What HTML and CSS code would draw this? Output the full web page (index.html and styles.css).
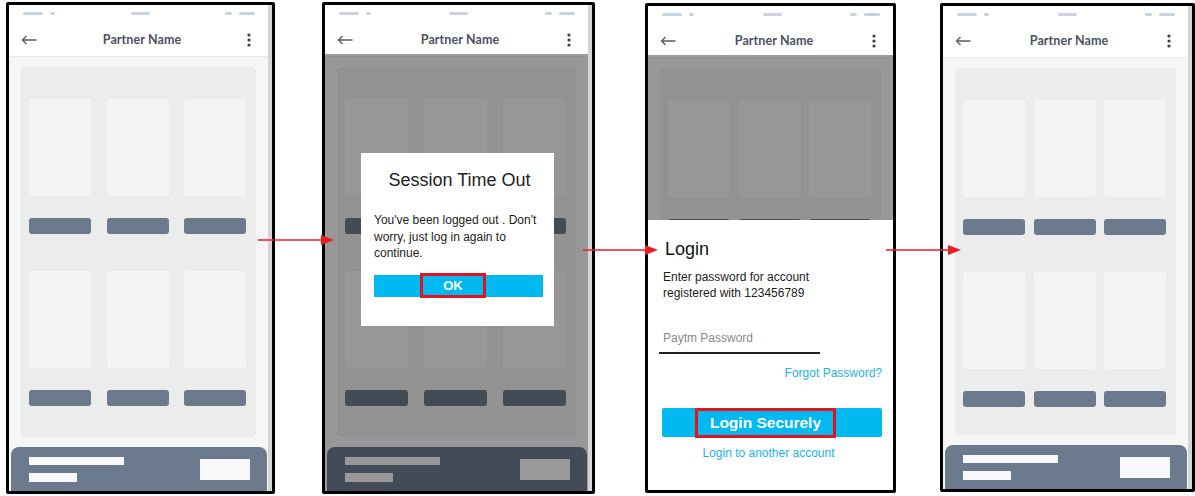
FILE: index.html
```html
<!DOCTYPE html>
<html>
<head>
<meta charset="utf-8">
<title>Session timeout flow</title>
<link rel="stylesheet" href="styles.css">
</head>
<body>
<div class="canvas">

  <!-- Phone 1 -->
  <div class="phone p1">
    <div class="screen striped">
      <div class="status">
        <div class="grp"><i class="d20"></i><i class="d5"></i></div>
        <div class="grp"><i class="d19"></i></div>
        <div class="grp"><i class="d7"></i><i class="d16"></i></div>
      </div>
      <div class="appbar">
        <svg class="back" width="16" height="10" viewBox="0 0 16 10"><path d="M15.5 5H1.5M5.5 1L1.5 5L5.5 9" fill="none" stroke="#555b66" stroke-width="1.3"/></svg>
        <span class="title">Partner Name</span>
        <svg class="kebab" width="4" height="14" viewBox="0 0 4 14"><circle cx="2" cy="2" r="1.6"/><circle cx="2" cy="7" r="1.6"/><circle cx="2" cy="12" r="1.6"/></svg>
      </div>
      <div class="body">
        <div class="panel">
          <div class="row cards"><b></b><b></b><b></b></div>
          <div class="row bars"><b></b><b></b><b></b></div>
          <div class="row cards"><b></b><b></b><b></b></div>
          <div class="row bars"><b></b><b></b><b></b></div>
        </div>
        <div class="footer">
          <div class="lines"><i class="l1"></i><i class="l2"></i></div>
          <i class="box"></i>
        </div>
      </div>
    </div>
  </div>

  <!-- Phone 2 -->
  <div class="phone p2">
    <div class="screen striped">
      <div class="status">
        <div class="grp"><i class="d20"></i><i class="d5"></i></div>
        <div class="grp"><i class="d19"></i></div>
        <div class="grp"><i class="d7"></i><i class="d16"></i></div>
      </div>
      <div class="appbar">
        <svg class="back" width="16" height="10" viewBox="0 0 16 10"><path d="M15.5 5H1.5M5.5 1L1.5 5L5.5 9" fill="none" stroke="#555b66" stroke-width="1.3"/></svg>
        <span class="title">Partner Name</span>
        <svg class="kebab" width="4" height="14" viewBox="0 0 4 14"><circle cx="2" cy="2" r="1.6"/><circle cx="2" cy="7" r="1.6"/><circle cx="2" cy="12" r="1.6"/></svg>
      </div>
      <div class="body dim">
        <div class="panel">
          <div class="row cards"><b></b><b></b><b></b></div>
          <div class="row bars"><b></b><b></b><b></b></div>
          <div class="row cards"><b></b><b></b><b></b></div>
          <div class="row bars"><b></b><b></b><b></b></div>
        </div>
        <div class="footer">
          <div class="lines"><i class="l1"></i><i class="l2"></i></div>
          <i class="box"></i>
        </div>
        <div class="dialog">
          <div class="d-title">Session Time Out</div>
          <div class="d-text">You've been logged out . Don't<br>worry, just log in again to<br>continue.</div>
          <div class="d-btn"><span class="hl ok">OK</span></div>
        </div>
      </div>
    </div>
  </div>

  <!-- Phone 3 -->
  <div class="phone p3">
    <div class="screen">
      <div class="status">
        <div class="grp"><i class="d20"></i><i class="d5"></i></div>
        <div class="grp"><i class="d19"></i></div>
        <div class="grp"><i class="d7"></i><i class="d16"></i></div>
      </div>
      <div class="appbar">
        <svg class="back" width="16" height="10" viewBox="0 0 16 10"><path d="M15.5 5H1.5M5.5 1L1.5 5L5.5 9" fill="none" stroke="#555b66" stroke-width="1.3"/></svg>
        <span class="title">Partner Name</span>
        <svg class="kebab" width="4" height="14" viewBox="0 0 4 14"><circle cx="2" cy="2" r="1.6"/><circle cx="2" cy="7" r="1.6"/><circle cx="2" cy="12" r="1.6"/></svg>
      </div>
      <div class="body dim">
        <div class="panel">
          <div class="row cards"><b></b><b></b><b></b></div>
          <div class="row bars"><b></b><b></b><b></b></div>
          <div class="row cards"><b></b><b></b><b></b></div>
          <div class="row bars"><b></b><b></b><b></b></div>
        </div>
        <div class="footer">
          <div class="lines"><i class="l1"></i><i class="l2"></i></div>
          <i class="box"></i>
        </div>
        <div class="login">
          <div class="lg-title">Login</div>
          <div class="lg-text">Enter password for account<br>registered with 123456789</div>
          <div class="lg-input">Paytm Password</div>
          <div class="lg-forgot">Forgot Password?</div>
          <div class="lg-btn"><span class="hl secure">Login Securely</span></div>
          <div class="lg-other">Login to another account</div>
        </div>
      </div>
    </div>
  </div>

  <!-- Phone 4 -->
  <div class="phone p4">
    <div class="screen striped">
      <div class="status">
        <div class="grp"><i class="d20"></i><i class="d5"></i></div>
        <div class="grp"><i class="d19"></i></div>
        <div class="grp"><i class="d7"></i><i class="d16"></i></div>
      </div>
      <div class="appbar">
        <svg class="back" width="16" height="10" viewBox="0 0 16 10"><path d="M15.5 5H1.5M5.5 1L1.5 5L5.5 9" fill="none" stroke="#555b66" stroke-width="1.3"/></svg>
        <span class="title">Partner Name</span>
        <svg class="kebab" width="4" height="14" viewBox="0 0 4 14"><circle cx="2" cy="2" r="1.6"/><circle cx="2" cy="7" r="1.6"/><circle cx="2" cy="12" r="1.6"/></svg>
      </div>
      <div class="body">
        <div class="panel">
          <div class="row cards"><b></b><b></b><b></b></div>
          <div class="row bars"><b></b><b></b><b></b></div>
          <div class="row cards"><b></b><b></b><b></b></div>
          <div class="row bars"><b></b><b></b><b></b></div>
        </div>
        <div class="footer">
          <div class="lines"><i class="l1"></i><i class="l2"></i></div>
          <i class="box"></i>
        </div>
      </div>
    </div>
  </div>

  <svg class="arrows" width="1195" height="496" viewBox="0 0 1195 496">
    <line x1="258" y1="240" x2="324" y2="240" stroke="#ee1b24" stroke-width="1.6"/>
    <polygon points="321,235 334,240 321,245" fill="#ee1b24"/>
    <line x1="583" y1="250" x2="647" y2="250" stroke="#ee1b24" stroke-width="1.6"/>
    <polygon points="645,245 658,250 645,255" fill="#ee1b24"/>
    <line x1="886" y1="250" x2="950" y2="250" stroke="#ee1b24" stroke-width="1.6"/>
    <polygon points="948,245 961,250 948,255" fill="#ee1b24"/>
  </svg>
</div>
</body>
</html>
```

FILE: styles.css
```css
html, body {
  margin: 0;
  padding: 0;
  background: #ffffff;
}

body {
  width: 1195px;
  height: 496px;
  overflow: hidden;
  font-family: "Liberation Sans", Arial, sans-serif;
}

.canvas {
  position: relative;
  width: 1195px;
  height: 496px;
  display: flex;
  align-items: flex-start;
  padding: 2px 0 0 6px;
  box-sizing: border-box;
}

.phone {
  border: 3px solid #000;
  box-sizing: border-box;
  display: flex;
  background: #fff;
  border-radius: 2px;
  flex: none;
  overflow: hidden;
}

.p1 { width: 269px; height: 492px; }
.p2 { width: 273px; height: 492px; margin-left: 47px; }
.p3 { width: 251px; height: 490px; margin-left: 50px; margin-top: 1px; }
.p4 { width: 255px; height: 489px; margin-left: 44px; margin-top: 1px; }

.screen {
  flex: 1;
  display: flex;
  flex-direction: column;
  min-width: 0;
  min-height: 0;
  background: #fff;
}

.screen.striped {
  border-right: 4px solid #d5d5d5;
}

/* status bar */
.status {
  height: 18px;
  flex: none;
  display: flex;
  justify-content: space-between;
  align-items: flex-start;
  padding: 7px 13px 0 14px;
  box-sizing: border-box;
}

.grp {
  display: flex;
  gap: 7px;
}

.status i {
  display: block;
  height: 3px;
  border-radius: 2px;
  background: #c8d3e1;
}

.status .d20 { width: 20px; }
.status .d5 { width: 5px; }
.status .d19 { width: 19px; }
.status .d7 { width: 7px; }
.status .d16 { width: 16px; }

/* app bar */
.appbar {
  height: 34px;
  flex: none;
  display: flex;
  align-items: center;
  justify-content: space-between;
  padding: 0 17px 0 12px;
  border-bottom: 1px solid #e4ebf3;
  box-sizing: border-box;
}

.back { display: block; }

.kebab {
  display: block;
  fill: #3a3f48;
}

.title {
  font-family: Lato, "Open Sans", sans-serif;
  font-weight: 700;
  font-size: 12.5px;
  color: #4b5262;
  letter-spacing: 0.1px;
}

/* body */
.body {
  position: relative;
  flex: 1;
  min-height: 0;
  display: flex;
  flex-direction: column;
  gap: 10px;
  padding-top: 10px;
  background: #f6f6f6;
}

.panel {
  flex: 1;
  min-height: 0;
  overflow: hidden;
  margin: 0 12px;
  padding: 32px 10px 0 8px;
  background: #ececec;
  border-radius: 4px;
}

.row {
  display: flex;
  justify-content: space-between;
}

.row b {
  display: block;
  width: 62px;
}

.row.cards { height: 97px; margin-bottom: 22px; }
.row.bars { height: 16px; margin-bottom: 37px; }
.row.bars:last-child { margin-bottom: 0; }

.row.cards b {
  background: #f4f4f4;
  border-radius: 2px;
}

.row.bars b {
  background: #6b7a8c;
  border-radius: 3px;
}

.p2 .row b { width: 63px; }

.footer {
  flex: none;
  height: 44px;
  margin: 0 1px 0 2px;
  background: #6b7a8d;
  border-radius: 8px 8px 0 0;
  display: flex;
  justify-content: space-between;
  align-items: flex-start;
  padding: 10px 17px 0 18px;
  box-sizing: border-box;
}

.footer .lines {
  display: flex;
  flex-direction: column;
  gap: 8px;
}

.footer i {
  display: block;
  background: #f8f7f9;
}

.footer .l1 { width: 95px; height: 8px; }
.footer .l2 { width: 48px; height: 9px; }
.footer .box { width: 50px; height: 21px; margin-top: 2px; }

/* dim overlay */
.body.dim::after {
  content: "";
  position: absolute;
  left: 0;
  right: 0;
  top: -3px;
  bottom: 0;
  background: rgba(0, 0, 0, 0.38);
  z-index: 1;
}

/* highlight box */
.hl {
  display: inline-flex;
  align-items: center;
  justify-content: center;
  border: 3px solid #e3141f;
  box-sizing: border-box;
  color: #fff;
  font-weight: 700;
}

/* dialog */
.dialog {
  position: absolute;
  z-index: 2;
  left: 36px;
  top: 96px;
  width: 193px;
  height: 173px;
  background: #fff;
  box-sizing: border-box;
  padding: 17px 11px 0 13px;
  color: #222;
}

.d-title {
  font-size: 18px;
  line-height: 20px;
  text-align: center;
  margin-left: 2px;
}

.d-text {
  margin-top: 22px;
  font-size: 12px;
  line-height: 16.5px;
  white-space: nowrap;
}

.d-btn {
  margin-top: 13px;
  height: 22px;
  background: #00b9f1;
  display: flex;
  justify-content: flex-start;
  align-items: center;
  padding-left: 46px;
}

.hl.ok {
  width: 66px;
  height: 25px;
  margin-top: -1px;
  font-size: 13px;
}

/* login sheet */
.login {
  position: absolute;
  z-index: 2;
  left: 0;
  right: 0;
  top: 162px;
  bottom: 0;
  background: #fff;
  padding: 18px 11px 0 15px;
  box-sizing: border-box;
  color: #1d1d1d;
}

.lg-title {
  font-size: 18px;
  line-height: 22px;
  margin-left: 2px;
  color: #111;
}

.lg-text {
  margin-top: 9px;
  font-size: 12px;
  line-height: 16px;
}

.lg-input {
  margin-top: 29px;
  margin-left: -4px;
  width: 161px;
  padding: 0 0 6px 4px;
  box-sizing: border-box;
  border-bottom: 2px solid #222;
  font-size: 12px;
  line-height: 16px;
  color: #8a8a8a;
}

.lg-forgot {
  margin-top: 11px;
  text-align: right;
  font-size: 12px;
  line-height: 16px;
  color: #22b2ee;
}

.lg-btn {
  margin-top: 27px;
  margin-left: -1px;
  height: 29px;
  background: #00b9f1;
  border-radius: 2px;
  display: flex;
  align-items: flex-start;
  padding-left: 33px;
}

.hl.secure {
  width: 141px;
  height: 30px;
  font-size: 15.5px;
}

.lg-other {
  margin-top: 8px;
  margin-right: 8px;
  text-align: center;
  font-size: 12px;
  line-height: 16px;
  color: #22b2ee;
}

.arrows {
  position: absolute;
  left: 0;
  top: 0;
  pointer-events: none;
  z-index: 5;
}
```
